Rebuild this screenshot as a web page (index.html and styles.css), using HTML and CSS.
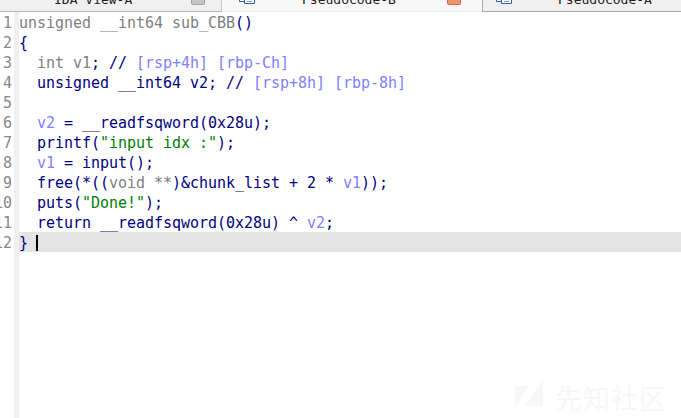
FILE: index.html
```html
<!DOCTYPE html>
<html lang="en">
<head>
<meta charset="utf-8">
<title>Pseudocode</title>
<link rel="stylesheet" href="styles.css">
</head>
<body>
<div class="tabbar">
  <div class="tab tab-a"><span class="tab-label">IDA View-A</span><span class="close grey"></span></div>
  <div class="tab tab-b">
    <svg class="tab-icon" width="16" height="4" viewBox="0 0 16 4"><path d="M0.5 0v1.5h5M5.5 0v3.5h10V0" fill="#fff" stroke="#2a62a8"/><path d="M8 1.5h5" stroke="#7d9cc4"/></svg>
    <span class="tab-label">Pseudocode-B</span><span class="close red"></span></div>
  <div class="tab tab-c">
    <svg class="tab-icon" width="16" height="4" viewBox="0 0 16 4"><path d="M0.5 0v1.5h5M5.5 0v3.5h10V0" fill="#fff" stroke="#2a62a8"/><path d="M8 1.5h5" stroke="#7d9cc4"/></svg>
    <span class="tab-label">Pseudocode-A</span></div>
</div>
<div class="editor">
  <div class="gutter">
    <div class="num">1</div><div class="num">2</div><div class="num">3</div><div class="num">4</div><div class="num">5</div><div class="num">6</div><div class="num">7</div><div class="num">8</div><div class="num">9</div><div class="num">10</div><div class="num">11</div><div class="num">12</div>
  </div>
  <div class="code">
    <div class="line"><span class="kw">unsigned __int64 sub_CBB</span><span class="p">()</span></div>
    <div class="line"><span class="p">{</span></div>
    <div class="line">  <span class="kw">int v1</span><span class="p">; // </span><span class="cm">[rsp+4h] [rbp-Ch]</span></div>
    <div class="line">  <span class="p">unsigned __int64 v2; // </span><span class="cm">[rsp+8h] [rbp-8h]</span></div>
    <div class="line"></div>
    <div class="line">  <span class="var">v2</span><span class="p"> = __readfsqword(0x28u);</span></div>
    <div class="line">  <span class="p">printf(</span><span class="str">"input idx :"</span><span class="p">);</span></div>
    <div class="line">  <span class="var">v1</span><span class="p"> = input();</span></div>
    <div class="line">  <span class="p">free(*((</span><span class="kw">void **</span><span class="p">)&amp;chunk_list + 2 * </span><span class="var">v1</span><span class="p">));</span></div>
    <div class="line">  <span class="p">puts(</span><span class="str">"Done!"</span><span class="p">);</span></div>
    <div class="line">  <span class="p">return __readfsqword(0x28u) ^ </span><span class="var">v2</span><span class="p">;</span></div>
    <div class="line current"><span class="p">}</span> <span class="caret"></span></div>
  </div>
</div>
<div class="watermark">
  <svg width="28" height="36" viewBox="0 0 28 36"><path d="M0 6h14L0 28zM28 0v26H10z" fill="#f7f7f7"/></svg>
  <span class="wm-text">先知社区</span>
</div>
</body>
</html>
```
FILE: styles.css
```css
html, body { margin: 0; padding: 0; }
body {
  width: 681px;
  height: 418px;
  overflow: hidden;
  background: #fff;
  position: relative;
}
.tabbar {
  display: flex;
  height: 12px;
  font: 13px/12px "DejaVu Sans Mono", monospace;
  color: #222;
  overflow: hidden;
}
.tab {
  box-sizing: border-box;
  height: 12px;
  overflow: hidden;
  position: relative;
}
.tab-a { width: 222px; background: #f0f0f0; border-bottom: 1px solid #b4b4b4; border-right: 1px solid #c8c8c8; }
.tab-b { width: 260px; background: #f8f8f8; border-bottom: 1px solid #eee; }
.tab-c { flex: 1; background: #f0f0f0; border-bottom: 1px solid #a8a8a8; border-left: 1px solid #a8a8a8; }
.tab-label { position: absolute; top: -6px; white-space: pre; }
.tab-a .tab-label { left: 54px; }
.tab-b .tab-label { left: 80px; }
.tab-c .tab-label { left: 75px; }
.tab-icon { position: absolute; top: 0; }
.tab-b .tab-icon { left: 17px; }
.tab-c .tab-icon { left: 13px; }
.close { box-sizing: border-box; position: absolute; top: 0; width: 14px; height: 5px; border-radius: 0 0 2px 2px; border: 1px solid; border-top: 0; }
.close.grey { left: 191px; background: #c4c4c4; border-color: #a4a4a4; }
.close.red { left: 225px; background: #ea9470; border-color: #dc6c44; }
.editor {
  display: flex;
  height: 406px;
  background: linear-gradient(90deg, #fff 0 14px, #f0f0f0 14px 19px, #fff 19px);
}
.gutter {
  width: 12px;
  flex: none;
  overflow: hidden;
  font: 15px/20px "DejaVu Sans Mono", monospace;
  color: #888;
}
.num {
  box-sizing: border-box;
  display: flex;
  justify-content: flex-end;
  height: 20px;
  padding-top: 1px;
  white-space: nowrap;
}
.code {
  flex: 1;
  margin-left: 7px;
  font: 15px/20px "DejaVu Sans Mono", monospace;
}
.line { box-sizing: border-box; height: 20px; padding-top: 1px; white-space: pre; letter-spacing: -0.03px; }
.current { background: #e4e4e4; }
.kw { color: #808080; }
.p { color: #000080; }
.cm { color: #8080ff; }
.var { color: #8080ff; }
.str { color: #008000; }
.caret { display: inline-block; width: 2px; height: 16px; margin-left: -1px; background: #000; vertical-align: -3px; }
.watermark {
  position: absolute;
  left: 515px;
  top: 380px;
  display: flex;
  align-items: center;
  gap: 12px;
}
.wm-text {
  font: 27px/32px "Noto Sans CJK SC", sans-serif;
  color: #f7f7f7;
  letter-spacing: 1px;
}
```
